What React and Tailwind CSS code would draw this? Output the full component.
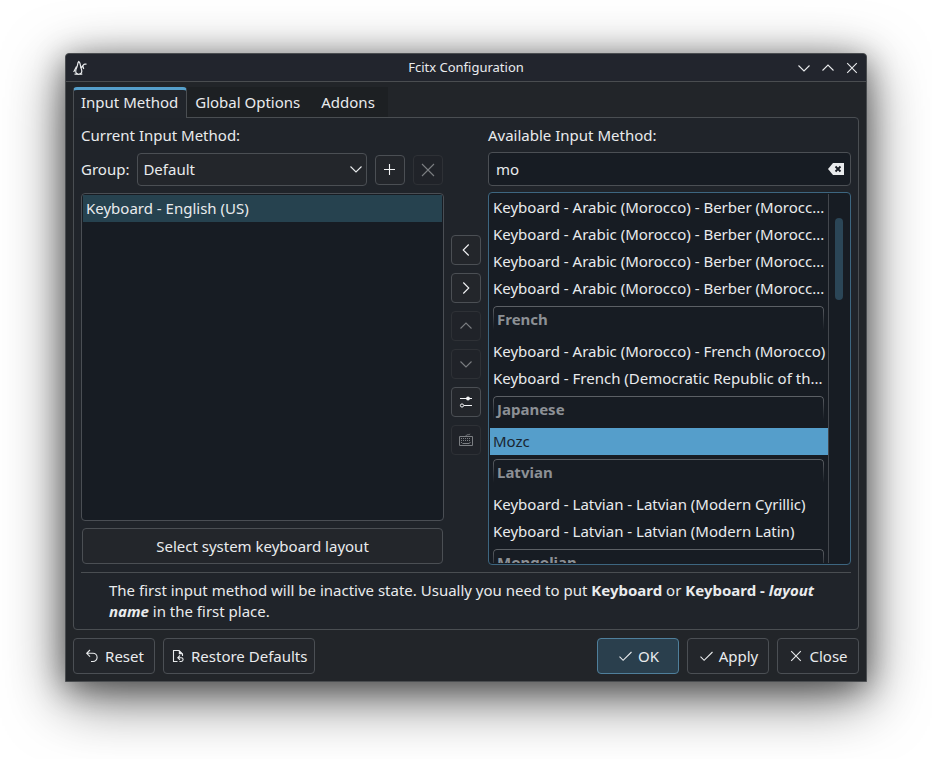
import { useState } from "react";
import clsx from "clsx";

const tabs = ["Input Method", "Global Options", "Addons"];

const available = [
    { id: "ma-tifinagh", name: "Keyboard - Arabic (Morocco) - Berber (Morocc..." },
    { id: "ma-tifinagh-alt", name: "Keyboard - Arabic (Morocco) - Berber (Morocc..." },
    { id: "ma-tifinagh-ext", name: "Keyboard - Arabic (Morocco) - Berber (Morocc..." },
    { id: "ma-tifinagh-phon", name: "Keyboard - Arabic (Morocco) - Berber (Morocc..." },
    { id: "fr", group: "French" },
    { id: "ma-french", name: "Keyboard - Arabic (Morocco) - French (Morocco)" },
    { id: "cd", name: "Keyboard - French (Democratic Republic of th..." },
    { id: "ja", group: "Japanese" },
    { id: "mozc", name: "Mozc" },
    { id: "lv", group: "Latvian" },
    { id: "lv-cyr", name: "Keyboard - Latvian - Latvian (Modern Cyrillic)" },
    { id: "lv-lat", name: "Keyboard - Latvian - Latvian (Modern Latin)" },
    { id: "mn", group: "Mongolian" },
];

const Icon = ({ size = 16, children, className }) => (
    <svg
        width={size}
        height={size}
        viewBox="0 0 16 16"
        fill="none"
        stroke="currentColor"
        strokeWidth="1.1"
        className={clsx("shrink-0", className)}
        aria-hidden="true"
    >
        {children}
    </svg>
);

const DownIcon = (props) => <Icon {...props}><path d="M2.5 5.5 8 11l5.5-5.5" /></Icon>;
const UpIcon = (props) => <Icon {...props}><path d="M2.5 10.5 8 5l5.5 5.5" /></Icon>;
const LeftIcon = () => <Icon><path d="M10.7 2.5 5.2 8l5.500 5.500" /></Icon>;
const RightIcon = () => <Icon><path d="M5.300 2.500 10.800 8l-5.500 5.500" /></Icon>;
const CrossIcon = ({ wide, ...props }) => (
    <Icon {...props}>
        <path d={wide ? "m2 2 12 12M14 2 2 14" : "m3.200 3.200 9.600 9.600M12.800 3.200l-9.600 9.600"} />
    </Icon>
);
const CheckIcon = () => <Icon><path d="m2.500 8.700 3.600 3.600L14.500 4" /></Icon>;
const PlusIcon = () => <Icon><path d="M7.500 2v11M2 7.500h11" /></Icon>;

const PenguinIcon = () => (
    <Icon>
        <path d="M6.800 1.500C5.300 3 6 4.500 5 6.800c-.9 2-2 3.700-1.200 5.500.7 1.900 3.200 2.600 4.900 1.300 1.600-1.400 1.200-3.600.4-5.400C8.300 6.300 8.800 3 6.800 1.500Z" strokeWidth="1.200" />
        <path d="M4.500 6.500 1.700 12M8.800 8l3.400-3.800M12.200 4.200h2.300M10.800 5.800l.9 3.200M2.500 14.200h3.300M7.500 14.200h2.800" strokeWidth="1.200" />
    </Icon>
);

const SlidersIcon = () => (
    <Icon>
        <path d="M2 4.500h12M6 11.500h8" />
        <circle cx="10" cy="4.500" r="1.900" fill="currentColor" stroke="none" />
        <circle cx="4" cy="11.500" r="1.600" strokeWidth="1" />
    </Icon>
);

const KeyboardIcon = () => (
    <Icon>
        <path d="M1.500 4.500h13v9h-13zM8 4.500c0-1.700 1-1.800 2.500-1.800 1 0 1.500-.2 1.500-.9" strokeWidth="1" />
        <path d="M3 6.500h10M3 8.500h10M3 10.500h1.500M11.500 10.500H13" strokeDasharray="1 1" strokeWidth="1" />
        <path d="M4.500 11.500h7" strokeWidth="1" />
    </Icon>
);

const ClearIcon = () => (
    <Icon>
        <path d="M0 8 5 2h11v12H5z" fill="currentColor" stroke="none" />
        <path d="m7.500 5.500 5 5M12.500 5.500l-5 5" stroke="#181c24" strokeWidth="1.800" />
    </Icon>
);

const UndoIcon = () => (
    <Icon>
        <path d="M6 2 2.700 5.300 6 8.600M2.700 5.300H9a4.100 4.100 0 0 1 0 8.200H7" />
    </Icon>
);

const RestoreIcon = () => (
    <Icon>
        <path d="M7.500 13.500h-4v-11H9l3.500 3.500v2" />
        <path d="M8.800 2v4.200H13z" fill="currentColor" stroke="none" />
        <path d="M10 7.500 7.800 9.700 10 11.900M7.800 9.700h3.400a1.900 1.900 0 0 1 0 3.800H9.500" />
    </Icon>
);

const ToolButton = ({ label, disabled, children }) => (
    <button
        type="button"
        aria-label={label}
        disabled={disabled}
        className="flex size-[30px] shrink-0 items-center justify-center rounded border border-[#4b4f54] bg-[#23262b] text-gray-100 disabled:border-[#2e3136] disabled:bg-[#202329] disabled:text-[#7b7e82]"
    >
        {children}
    </button>
);

const DialogButton = ({ primary, wide, icon, children }) => (
    <button
        type="button"
        className={clsx(
            "flex h-9 items-center justify-center gap-[5px] rounded border",
            wide ? "pr-[7px] pl-1.5" : "w-[82px]",
            primary ? "border-[#4f7f9b] bg-[#2a3f4d]" : "border-[#4b4f54] bg-[#23262b]"
        )}
    >
        {icon}
        {children}
    </button>
);

const GroupHeader = ({ name }) => (
    <li role="presentation" className="h-9 pt-1 pr-1 pl-[3px] font-bold text-[#8c9095]">
        <div className="relative px-1 leading-[27px]">
            <span className="absolute inset-x-0 top-0 h-6 rounded-t-sm border-x border-t border-[#5e6267] [mask-image:linear-gradient(to_bottom,black,transparent)]" />
            {name}
        </div>
    </li>
);

const App = () => {
    const [tab, setTab] = useState("Input Method");
    const [query, setQuery] = useState("mo");
    const [selected, setSelected] = useState("mozc");

    return (
        <div className="flex h-screen flex-col bg-white px-[65px] pt-[53px] pb-[77px] font-['Noto_Sans',sans-serif] text-[15px] leading-[21px] text-[#e9ebed]">
            <div className="flex min-h-0 flex-1 flex-col rounded-t border border-[#4a4d50] bg-[#222529] shadow-[0_16px_60px_rgba(0,0,0,0.6),0_6px_30px_rgba(0,0,0,0.4)]">
                <header className="grid h-7 shrink-0 grid-cols-[1fr_auto_1fr] items-center rounded-t border-b border-[#4a4d50] bg-[#22252d] px-0.5 text-[13px]">
                    <div className="pl-1"><PenguinIcon /></div>
                    <h1>Fcitx Configuration</h1>
                    <div className="flex justify-end">
                        <button type="button" aria-label="Minimize" className="flex w-6 justify-center"><DownIcon /></button>
                        <button type="button" aria-label="Maximize" className="flex w-6 justify-center"><UpIcon /></button>
                        <button type="button" aria-label="Close window" className="flex w-6 justify-center"><CrossIcon /></button>
                    </div>
                </header>

                <main className="flex min-h-0 flex-1 flex-col px-[7px] pt-[5px] pb-[7px]">
                    <div role="tablist" className="z-10 -mb-px flex shrink-0">
                        {tabs.map((name) => (
                            <button
                                key={name}
                                type="button"
                                role="tab"
                                aria-selected={tab === name}
                                onClick={() => setTab(name)}
                                className={clsx(
                                    "h-[31px]",
                                    tab === name
                                        ? "rounded-t border-x border-t-3 border-x-[#4a4e52] border-t-[#559fca] bg-[#21252b] pr-2 pb-[3px] pl-[7px]"
                                        : "border-b border-[#4a4e52] bg-[#1d2023] pt-px pr-[13px] pl-2"
                                )}
                            >
                                {name}
                            </button>
                        ))}
                    </div>

                    <section className="flex min-h-0 flex-1 flex-col rounded rounded-tl-none border border-[#4a4e52] bg-[#20242a] p-[7px]">
                        <div className="grid min-h-0 flex-1 grid-cols-[minmax(0,1fr)_30px_minmax(0,1fr)] grid-rows-[minmax(0,1fr)] gap-[7px]">
                            <div className="flex min-h-0 flex-col gap-[7px]">
                                <h2>Current Input Method:</h2>
                                <div className="flex items-center gap-2 pr-px">
                                    <label htmlFor="group">Group:</label>
                                    <div className="relative flex-1">
                                        <select
                                            id="group"
                                            className="h-[33px] w-full appearance-none rounded border border-[#4b4f54] bg-[#23262b] px-[5px]"
                                        >
                                            <option>Default</option>
                                        </select>
                                        <DownIcon className="pointer-events-none absolute top-2 right-[3px]" />
                                    </div>
                                    <ToolButton label="Add group"><PlusIcon /></ToolButton>
                                    <ToolButton label="Delete group" disabled><CrossIcon wide /></ToolButton>
                                </div>
                                <ul role="listbox" aria-label="Current input methods" className="min-h-0 flex-1 rounded border border-[#4a4e54] bg-[#171c23] p-px">
                                    <li role="option" aria-selected="true" className="h-[27px] truncate bg-[#26424f] px-[3px] leading-[27px]">
                                        Keyboard - English (US)
                                    </li>
                                </ul>
                                <button type="button" className="mx-px mb-px h-9 shrink-0 rounded border border-[#4b4f54] bg-[#23262b]">
                                    Select system keyboard layout
                                </button>
                            </div>

                            <div className="flex flex-col justify-center gap-2">
                                <ToolButton label="Add input method"><LeftIcon /></ToolButton>
                                <ToolButton label="Remove input method"><RightIcon /></ToolButton>
                                <ToolButton label="Move up" disabled><UpIcon /></ToolButton>
                                <ToolButton label="Move down" disabled><DownIcon /></ToolButton>
                                <ToolButton label="Configure"><SlidersIcon /></ToolButton>
                                <ToolButton label="Keyboard layout" disabled><KeyboardIcon /></ToolButton>
                            </div>

                            <div className="flex min-h-0 flex-col gap-1.5">
                                <label htmlFor="search">Available Input Method:</label>
                                <div className="flex h-[34px] shrink-0 items-center rounded border border-[#4b4f54] bg-[#171c23] pr-1.5 pl-[7px]">
                                    <input
                                        id="search"
                                        type="text"
                                        value={query}
                                        onChange={(e) => setQuery(e.target.value)}
                                        className="min-w-0 flex-1 bg-transparent outline-none"
                                    />
                                    <button type="button" aria-label="Clear search" onClick={() => setQuery("")}>
                                        <ClearIcon />
                                    </button>
                                </div>
                                <div className="flex min-h-0 flex-1 rounded border border-[#3d6680] bg-[#171c23] p-px">
                                    <ul role="listbox" aria-label="Available input methods" className="min-w-0 flex-1 overflow-hidden">
                                        {available.map((item) =>
                                            item.group ? (
                                                <GroupHeader key={item.id} name={item.group} />
                                            ) : (
                                                <li
                                                    key={item.id}
                                                    role="option"
                                                    aria-selected={selected === item.id}
                                                    onClick={() => setSelected(item.id)}
                                                    className={clsx(
                                                        "h-[27px] truncate pl-[3px] leading-[27px]",
                                                        selected === item.id && "bg-[#559ecb] text-[#1a2530]"
                                                    )}
                                                >
                                                    {item.name}
                                                </li>
                                            )
                                        )}
                                    </ul>
                                    <div className="w-[21px] shrink-0 border-l border-[#43474d] pt-6 pl-1.5">
                                        <div className="h-[82px] w-2 rounded-full bg-[#2b4657]" />
                                    </div>
                                </div>
                            </div>
                        </div>

                        <hr className="mt-[7px] border-[#4a4e52]" />
                        <p className="px-7 pt-[7px]">
                            The first input method will be inactive state. Usually you need to put <b>Keyboard</b> or{" "}
                            <b>Keyboard - <i>layout name</i></b> in the first place.
                        </p>
                    </section>

                    <footer className="mt-2 flex shrink-0 gap-2">
                        <DialogButton icon={<UndoIcon />}>Reset</DialogButton>
                        <DialogButton wide icon={<RestoreIcon />}>Restore Defaults</DialogButton>
                        <div className="flex-1" />
                        <DialogButton primary icon={<CheckIcon />}>OK</DialogButton>
                        <DialogButton icon={<CheckIcon />}>Apply</DialogButton>
                        <DialogButton icon={<CrossIcon />}>Close</DialogButton>
                    </footer>
                </main>
            </div>
        </div>
    );
};

export default App;
